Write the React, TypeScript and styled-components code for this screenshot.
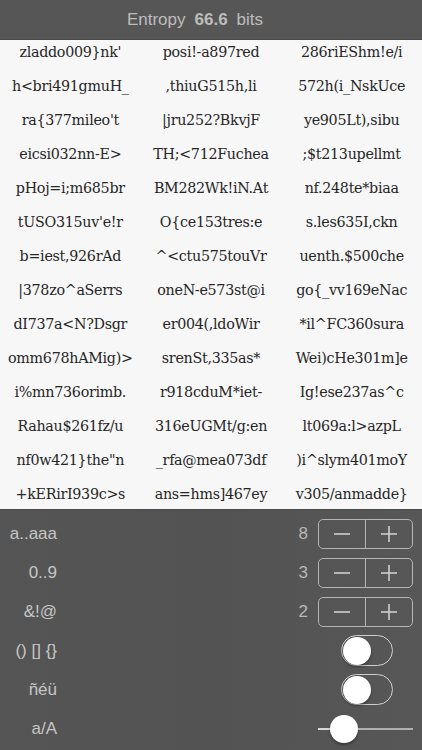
import styled, { createGlobalStyle } from "styled-components";

const GlobalStyle = createGlobalStyle`
  html, body {
    margin: 0;
    padding: 0;
    background: #545454;
  }
  * {
    box-sizing: border-box;
  }
`

const words: string[][] = [
  ["zladdo009}nk'", "posi!-a897red", "286riEShm!e/i"],
  ["h<bri491gmuH_", ",thiuG515h,li", "572h(i_NskUce"],
  ["ra{377mileo't", "|jru252?BkvjF", "ye905Lt),sibu"],
  ["eicsi032nn-E>", "TH;<712Fuchea", ";$t213upellmt"],
  ["pHoj=i;m685br", "BM282Wk!iN.At", "nf.248te*biaa"],
  ["tUSO315uv'e!r", "O{ce153tres:e", "s.les635I,ckn"],
  ["b=iest,926rAd", "^<ctu575touVr", "uenth.$500che"],
  ["|378zo^aSerrs", "oneN-e573st@i", "go{_vv169eNac"],
  ["dI737a<N?Dsgr", "er004(,ldoWir", "*il^FC360sura"],
  ["omm678hAMig)>", "srenSt,335as*", "Wei)cHe301m]e"],
  ["i%mn736orimb.", "r918cduM*iet-", "Ig!ese237as^c"],
  ["Rahau$261fz/u", "316eUGMt/g:en", "lt069a:l>azpL"],
  ["nf0w421}the\"n", "_rfa@mea073df", ")i^slym401moY"],
  ["+kERirI939c>s", "ans=hms]467ey", "v305/anmadde}"],
];

const Screen = styled.div`
  width: 422px;
  height: 750px;
  display: flex;
  flex-direction: column;
  background: #545454;
  overflow: hidden;
`

const Header = styled.div`
  height: 40px;
  display: flex;
  align-items: center;
  justify-content: center;
  gap: 9px;
  padding-right: 32px;
  background: #565656;
  border-bottom: 1px solid #4a4a4a;
  font-family: "Liberation Sans", Arial, sans-serif;
  font-size: 17px;
  color: #bdbdbd;
`

const Value = styled.span`
  font-weight: bold;
`

const Words = styled.div`
  height: 470px;
  display: grid;
  grid-template-columns: repeat(3, 1fr);
  grid-auto-rows: 34px;
  overflow: hidden;
  background: #f7f7f7;
  border-bottom: 1px solid #4a4a4a;
`

const Word = styled.div`
  line-height: 24px;
  text-align: center;
  white-space: nowrap;
  font-family: "DejaVu Serif", "Liberation Serif", serif;
  font-size: 14.3px;
  letter-spacing: -0.3px;
  color: #262626;
`

const Panel = styled.div`
  flex: 1;
  display: flex;
  flex-direction: column;
  padding-top: 4px;
  background: linear-gradient(90deg, #555 0%, #535353 50%, #575757 100%);
`

const Row = styled.div`
  height: 39px;
  display: flex;
  align-items: center;
  padding-right: 9px;
  font-family: "Liberation Sans", Arial, sans-serif;
  font-size: 17px;
  color: #c6c6c6;
`

const Label = styled.div`
  width: 57px;
  text-align: right;
  white-space: nowrap;
`

const Spacer = styled.div`
  flex: 1;
`

const Count = styled.div`
  margin-right: 10px;
  color: #b8b8b8;
`

const Stepper = styled.div`
  width: 95px;
  height: 30px;
  display: flex;
  border: 1px solid #b4b4b4;
  border-radius: 5px;
`

const StepButton = styled.div<{ divided?: boolean }>`
  flex: 1;
  display: flex;
  align-items: center;
  justify-content: center;
  border-left: ${({ divided }) => (divided ? "1px solid #b4b4b4" : "none")};
`

const Toggle = styled.div`
  width: 52px;
  height: 31px;
  margin-right: 20px;
  display: flex;
  align-items: center;
  padding: 0 1px;
  border: 1.5px solid #d0d0d0;
  border-radius: 16px;
`

const Knob = styled.div<{ size: number }>`
  width: ${({ size }) => size}px;
  height: ${({ size }) => size}px;
  border-radius: 50%;
  background: #fff;
  box-shadow: 0 2px 3px rgba(0, 0, 0, 0.35);
`

const Slider = styled.div`
  width: 95px;
  height: 30px;
  display: flex;
  align-items: center;
`

const Track = styled.div<{ grow: number; tone: string }>`
  flex: ${({ grow }) => grow};
  height: 2px;
  background: ${({ tone }) => tone};
`

const Minus = () => (
  <svg width="18" height="18" viewBox="0 0 18 18">
    <line x1="1" y1="9" x2="17" y2="9" stroke="#cfcfcf" strokeWidth="1.6" />
  </svg>
);

const Plus = () => (
  <svg width="18" height="18" viewBox="0 0 18 18">
    <line x1="1" y1="9" x2="17" y2="9" stroke="#cfcfcf" strokeWidth="1.6" />
    <line x1="9" y1="1" x2="9" y2="17" stroke="#cfcfcf" strokeWidth="1.6" />
  </svg>
);

const counters = [
  { label: "a..aaa", count: 8 },
  { label: "0..9", count: 3 },
  { label: "&!@", count: 2 },
];

const toggles = ["() [] {}", "ñéü"];

const App = () => {
  return (
    <>
      <GlobalStyle />
      <Screen>
        <Header>
          <span>Entropy</span>
          <Value>66.6</Value>
          <span>bits</span>
        </Header>
        <Words>
          {words.flat().map((w, i) => (
            <Word key={i}>{w}</Word>
          ))}
        </Words>
        <Panel>
          {counters.map((c) => (
            <Row key={c.label}>
              <Label>{c.label}</Label>
              <Spacer />
              <Count>{c.count}</Count>
              <Stepper>
                <StepButton><Minus /></StepButton>
                <StepButton divided><Plus /></StepButton>
              </Stepper>
            </Row>
          ))}
          {toggles.map((t) => (
            <Row key={t}>
              <Label>{t}</Label>
              <Spacer />
              <Toggle>
                <Knob size={28} />
              </Toggle>
            </Row>
          ))}
          <Row>
            <Label>a/A</Label>
            <Spacer />
            <Slider>
              <Track grow={12} tone="#d8d8d8" />
              <Knob size={28} />
              <Track grow={55} tone="#b0b0b0" />
            </Slider>
          </Row>
        </Panel>
      </Screen>
    </>
  );
}

export default App;
